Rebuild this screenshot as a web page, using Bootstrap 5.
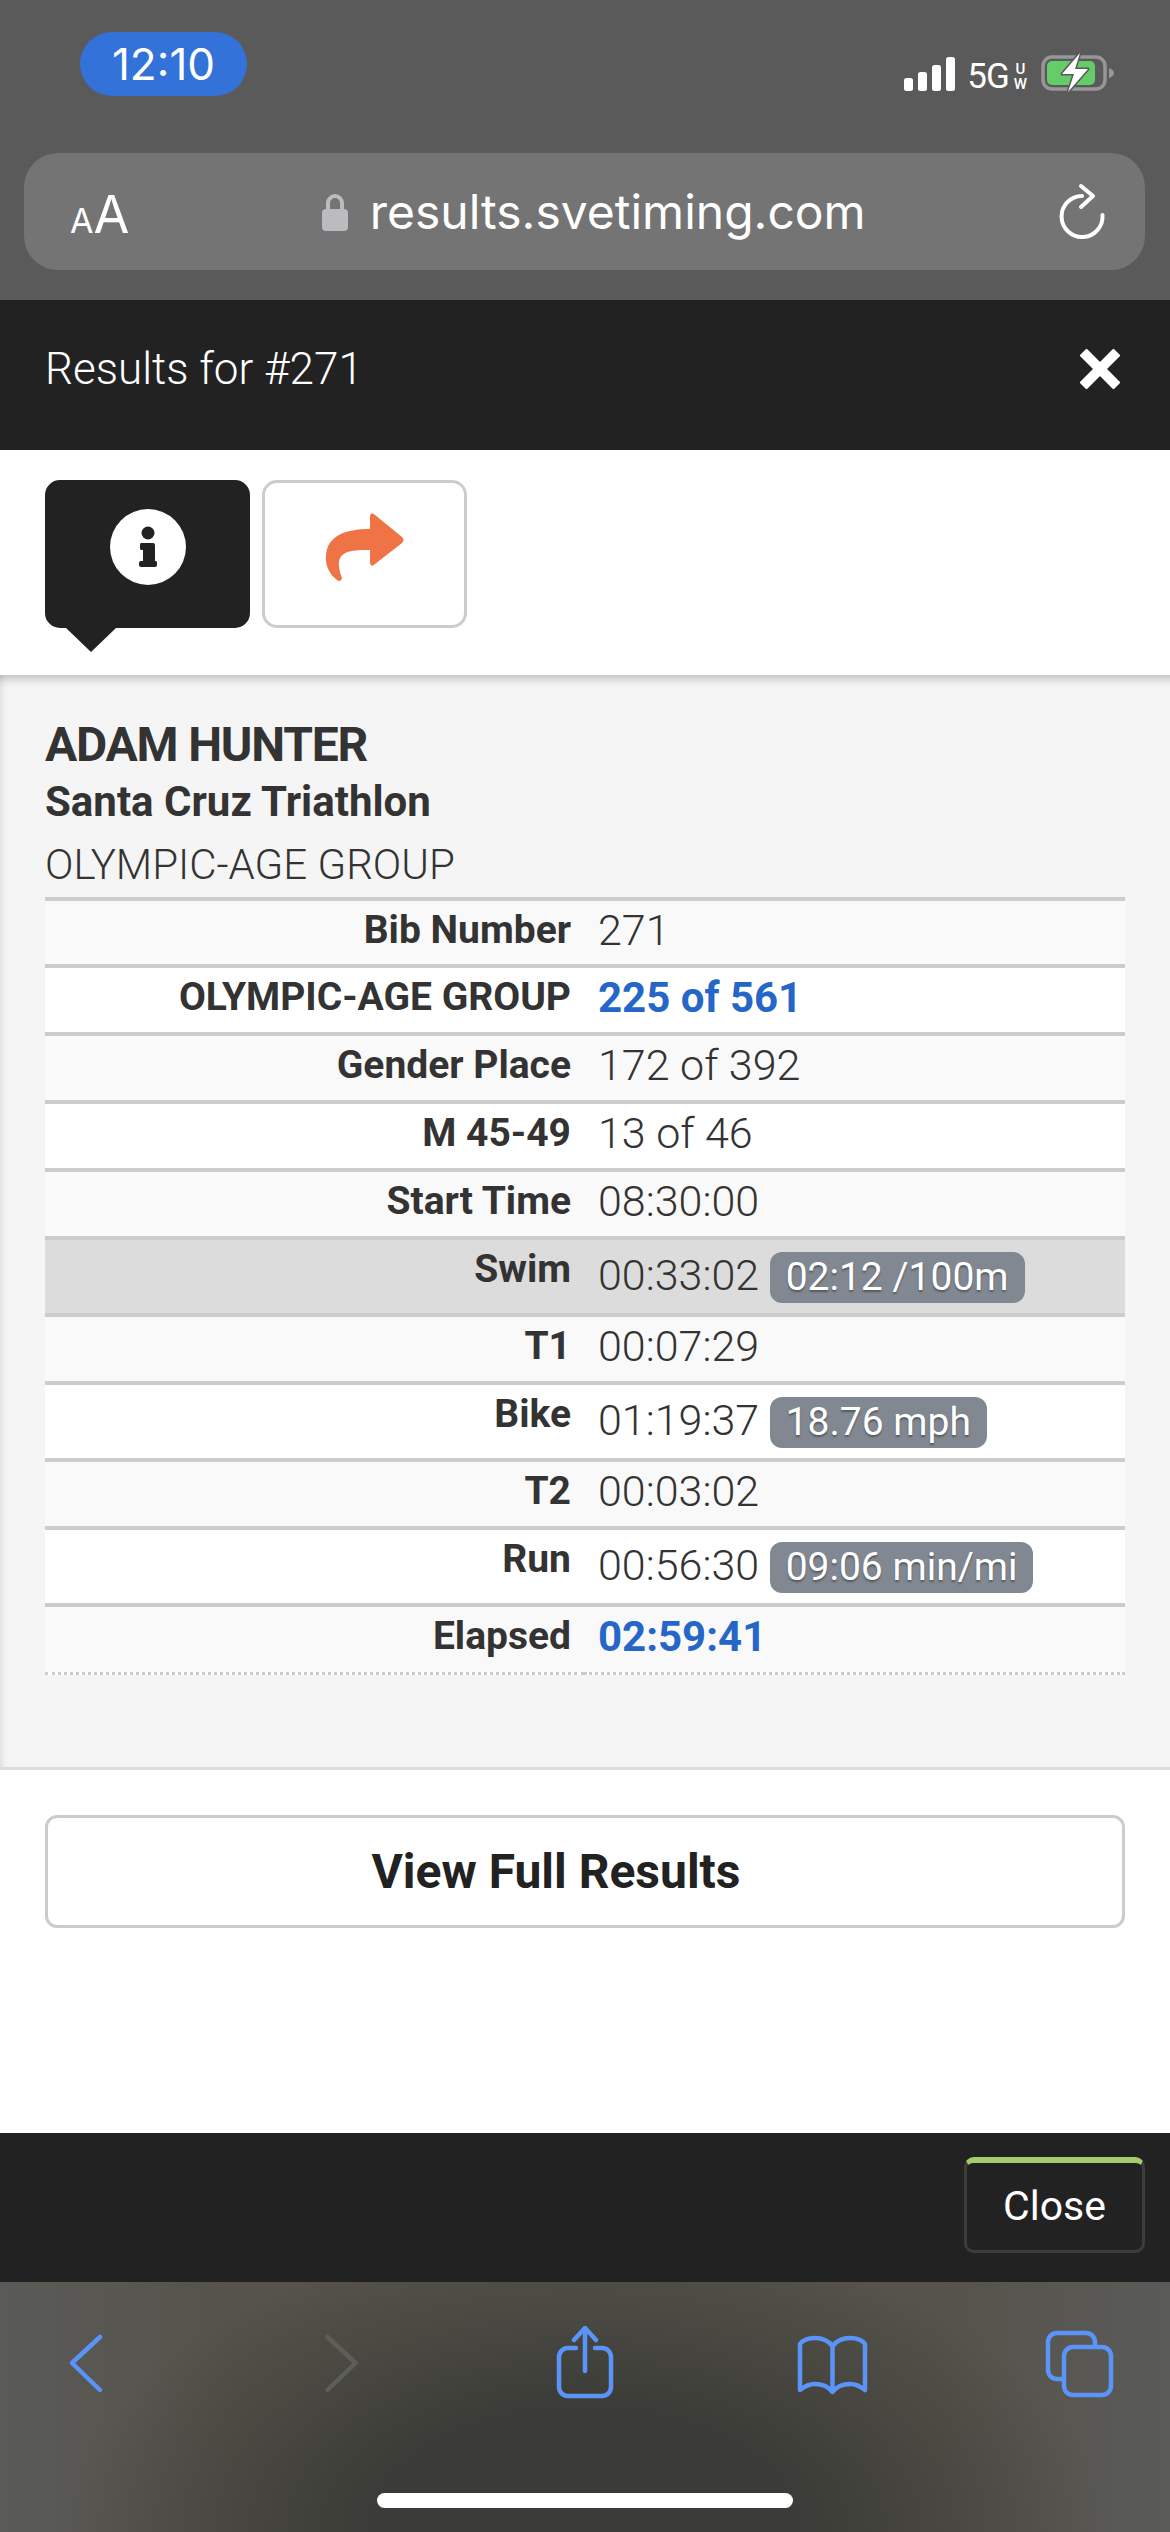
<!DOCTYPE html>
<html lang="en">
<head>
  <meta charset="UTF-8" />
  <meta name="viewport" content="width=device-width, initial-scale=1.0" />
  <title>Results for #271</title>
  <link href="https://cdn.jsdelivr.net/npm/bootstrap@5.3.0/dist/css/bootstrap.min.css" rel="stylesheet">
  <style>
    body { font-family: Roboto, "Liberation Sans", sans-serif; font-weight: 300; color: #333; background: #fff; }
    .res-screen { width: 1170px; height: 2532px; overflow: hidden; }

    /* safari chrome, top */
    .safari-top { height: 300px; background: #5a5a5a; color: #fff; font-family: Inter, "Liberation Sans", sans-serif; font-weight: 400; }
    .status-row { padding: 32px 54px 0 80px; height: 96px; }
    .clock-pill { width: 167px; height: 64px; line-height: 64px; border-radius: 32px; background: #3272d9; text-align: center; font-size: 44px; }
    .status-icons { margin-top: 18px; font-family: Roboto, "Liberation Sans", sans-serif; }
    .net-5g { font-size: 35px; line-height: 35px; margin: 9px 0 0 12px; letter-spacing: -1px; }
    .net-uw { font-size: 15px; line-height: 15px; font-weight: 500; margin: 12px 14px 0 5px; text-align: center; }
    .url-bar { height: 117px; margin: 57px 25px 0 24px; padding: 0 39px 0 46px; background: #747474; border-radius: 34px; }
    .url-aa { line-height: 1; white-space: nowrap; padding-top: 6px; }
    .url-aa .aa-s { font-size: 34px; }
    .url-aa .aa-l { font-size: 52px; }
    .url-lock { gap: 22px; }
    .url-text { font-size: 48px; line-height: 60px; }

    /* modal header */
    .res-head { height: 150px; padding: 0 50px 12px 45px; background: #222; color: #fff; font-size: 44px; }

    /* icon tabs */
    .tab-strip { height: 225px; padding: 30px 0 0 45px; gap: 12px; background: #fff; }
    .tab-btn { width: 205px; height: 148px; padding: 0 0 14px; border-radius: 15px; border: 3px solid #ccc; background: #fff; }
    .tab-btn.is-on { position: relative; background: #222; border-color: #222; }
    .tab-btn.is-on::after { content: ""; position: absolute; left: 18px; top: 145px; border-style: solid; border-width: 24px 25px 0; border-color: #222 transparent transparent; }

    /* result panel */
    .res-panel { padding: 40px 45px 92px; background: #f5f5f5; border-bottom: 3px solid #ddd; box-shadow: inset 0 14px 10px -10px rgba(0,0,0,.22), inset 8px 0 6px -6px rgba(0,0,0,.1); }
    .res-name { font-size: 48px; line-height: 60px; font-weight: 700; letter-spacing: -1.2px; }
    .res-event { font-size: 42px; line-height: 54px; font-weight: 700; }
    .res-group { font-size: 42px; line-height: 60px; margin: 6px 0 2px; }

    .res-table { --bs-table-bg: #fff; --bs-table-striped-bg: #f9f9f9; --bs-table-color: #333; --bs-table-striped-color: #333; table-layout: fixed; width: 1080px; margin: 0; border-collapse: separate; border-spacing: 0; border-top: 4px solid #ccc; }
    .res-table > tbody > tr > * { height: 68px; padding: 5px 0 0; border-bottom: 4px solid #ccc; vertical-align: top; }
    .res-table > tbody > tr:first-child > * { height: 67px; }
    .res-table th { width: 539px; padding-right: 13px !important; text-align: right; font-size: 39px; line-height: 48px; font-weight: 700; }
    .res-table td { padding-left: 14px !important; font-size: 43px; line-height: 48px; font-weight: 300; white-space: nowrap; }
    .res-table tr.has-pace > * { height: 77px; }
    .res-table tr.has-pace > td { padding-top: 11px; }
    .res-table tr.is-swim > * { --bs-table-accent-bg: #dcdcdc; }
    .res-table tr.is-last > * { height: 68px; border-bottom: 3px dotted #ccc; }
    .res-blue { color: #2566c8; font-size: 42px; font-weight: 700; }
    .pace-pill { height: 51px; padding: 0 16px; font-size: 39px; line-height: 51px; font-weight: 400; border-radius: 12px; background: #828891; color: #fff; text-shadow: 0 2px 2px rgba(0,0,0,.35); vertical-align: baseline; }

    .res-full { padding: 45px 45px 0; }
    .res-full .btn { height: 113px; padding: 0 58px 0 0; border: 3px solid #ccc; border-radius: 12px; background: #fff; color: #222; font-size: 48px; font-weight: 700; }

    /* modal footer */
    .res-foot { height: 149px; padding: 24px 25px 0 0; background: #222; }
    .close-btn { width: 181px; height: 96px; padding: 0; border: 3px solid #3c3c3c; border-top: 6px solid #a3cc6b; border-radius: 10px; background: #222; color: #fff; font-size: 41px; font-weight: 400; }

    /* safari chrome, bottom */
    .safari-bottom { height: 250px; padding: 44px 45px 0 41px; background:
      radial-gradient(ellipse 520px 300px at 50% 100%, #3b3b37 40%, rgba(59,59,55,0) 100%),
      linear-gradient(90deg, #5a5a58 0, #55534a 20%, #55534a 80%, #5a5a58 100%); }
    .safari-bottom svg { width: 90px; height: 80px; fill: none; stroke: #5b94f8; stroke-width: 4.5; stroke-linecap: round; stroke-linejoin: round; }
    .home-bar { width: 416px; height: 15px; margin: 87px auto 0; border-radius: 8px; background: #fff; position: relative; left: 2px; }
  </style>
</head>
<body>
  <div class="res-screen d-flex flex-column">

    <div class="safari-top">
      <div class="status-row d-flex justify-content-between align-items-start">
        <div class="clock-pill">12:10</div>
        <div class="status-icons d-flex align-items-start">
          <svg width="51" height="42" viewBox="0 0 51 42" fill="#fff">
            <rect x="0" y="28" width="9" height="13" rx="2.5"/>
            <rect x="14" y="22" width="9" height="19" rx="2.5"/>
            <rect x="28" y="15" width="9" height="26" rx="2.5"/>
            <rect x="42" y="7" width="9" height="34" rx="2.5"/>
          </svg>
          <span class="net-5g">5G</span>
          <span class="net-uw">U<br>W</span>
          <svg width="75" height="44" viewBox="0 0 75 44">
            <rect x="2" y="7" width="62" height="32" rx="9" fill="none" stroke="#979797" stroke-width="3.5"/>
            <rect x="6" y="11" width="48" height="24" rx="5" fill="#64cc68"/>
            <path d="M68 18 Q73 20 73 23 Q73 26 68 28 Z" fill="#979797"/>
            <path d="M39 3 L21 24 H33 L27 42 L47 19 H34 Z" fill="#fff" stroke="#5a5a5a" stroke-width="3" stroke-linejoin="round" paint-order="stroke"/>
          </svg>
        </div>
      </div>
      <div class="url-bar d-flex justify-content-between align-items-center">
        <div class="url-aa"><span class="aa-s">A</span><span class="aa-l">A</span></div>
        <div class="url-lock d-flex align-items-center">
          <svg width="26" height="38" viewBox="0 0 26 38">
            <path d="M6 18 V10 a7 7 0 0 1 14 0 V18" fill="none" stroke="#bbbbc0" stroke-width="4"/>
            <rect x="0" y="16" width="26" height="22" rx="4" fill="#bbbbc0"/>
          </svg>
          <span class="url-text">results.svetiming.com</span>
        </div>
        <svg width="48" height="60" viewBox="0 0 48 60" fill="none" stroke="#fff" stroke-width="4" stroke-linecap="round" stroke-linejoin="round">
          <path d="M44.5 33 A20.5 20.5 0 1 1 24 14"/>
          <path d="M23 4 L35 14 L23 25"/>
        </svg>
      </div>
    </div>

    <div class="res-head d-flex justify-content-between align-items-center">
      <span>Results for #271</span>
      <svg width="40" height="40" viewBox="0 0 40 40" stroke="#fff" stroke-width="10">
        <path d="M3 3 L37 37 M37 3 L3 37"/>
      </svg>
    </div>

    <div class="tab-strip d-flex align-items-start">
      <button type="button" class="btn tab-btn is-on">
        <svg width="76" height="76" viewBox="0 0 76 76">
          <circle cx="38" cy="38" r="38" fill="#fff"/>
          <circle cx="38" cy="24" r="6.5" fill="#222"/>
          <path d="M31 34 H43 Q45 34 45 36 V52 H46 Q47 52 47 54 V56 Q47 58 45 58 H31 Q29 58 29 56 V54 Q29 52 31 52 H33 V41 H31 Q30 41 30 39 V36 Q30 34 31 34 Z" fill="#222"/>
        </svg>
      </button>
      <button type="button" class="btn tab-btn">
        <svg width="80" height="70" viewBox="0 0 80 70" fill="#ef7344">
          <path d="M45 4 Q46 -1 50 3 L77 25 Q80 28 77 31 L50 52 Q46 56 45 51 L45 38 C28 38 12 38 14 55 Q15 62 17 66 Q16 71 12 68 C4 62 0 52 1 44 C2 24 20 17 45 17 Z"/>
        </svg>
      </button>
    </div>

    <div class="res-panel">
      <div class="res-name">ADAM HUNTER</div>
      <div class="res-event">Santa Cruz Triathlon</div>
      <div class="res-group">OLYMPIC-AGE GROUP</div>
      <table class="table table-striped res-table">
        <tbody>
          <tr><th>Bib Number</th><td>271</td></tr>
          <tr><th>OLYMPIC-AGE GROUP</th><td><span class="res-blue">225 of 561</span></td></tr>
          <tr><th>Gender Place</th><td>172 of 392</td></tr>
          <tr><th>M 45-49</th><td>13 of 46</td></tr>
          <tr><th>Start Time</th><td>08:30:00</td></tr>
          <tr class="has-pace is-swim"><th>Swim</th><td>00:33:02 <span class="badge pace-pill">02:12 /100m</span></td></tr>
          <tr><th>T1</th><td>00:07:29</td></tr>
          <tr class="has-pace"><th>Bike</th><td>01:19:37 <span class="badge pace-pill">18.76 mph</span></td></tr>
          <tr><th>T2</th><td>00:03:02</td></tr>
          <tr class="has-pace"><th>Run</th><td>00:56:30 <span class="badge pace-pill">09:06 min/mi</span></td></tr>
          <tr class="is-last"><th>Elapsed</th><td><span class="res-blue">02:59:41</span></td></tr>
        </tbody>
      </table>
    </div>

    <div class="res-full flex-grow-1">
      <button type="button" class="btn w-100">View Full Results</button>
    </div>

    <div class="res-foot d-flex justify-content-end align-items-start">
      <button type="button" class="btn close-btn">Close</button>
    </div>

    <div class="safari-bottom">
      <div class="d-flex justify-content-between">
        <svg viewBox="0 0 90 80"><path d="M59 11 L31 37 L59 64" /></svg>
        <svg viewBox="0 0 90 80" style="stroke:#5e5e59"><path d="M37.5 11 L65.5 37 L37.5 64" /></svg>
        <svg viewBox="0 0 90 80">
          <path d="M38 22 H30 a9 9 0 0 0 -9 9 V61 a9 9 0 0 0 9 9 H64 a9 9 0 0 0 9 -9 V31 a9 9 0 0 0 -9 -9 H57"/>
          <path d="M47 45 V2 M36 14 L47 2 L58 14"/>
        </svg>
        <svg viewBox="0 0 90 80">
          <path d="M45.5 20 C40 13 32 12 28 12 C22 12 16 14 13 18 V64 C18 60 24 58 28 58 C34 58 41 60 45.5 66 C50 60 57 58 63 58 C67 58 73 60 78 64 V18 C75 14 69 12 63 12 C59 12 51 13 45.5 20 V66"/>
        </svg>
        <svg viewBox="0 0 90 80">
          <rect x="29" y="21" width="47" height="48" rx="9"/>
          <path d="M60 19 V16 a9 9 0 0 0 -9 -9 H22 a9 9 0 0 0 -9 9 V44 a9 9 0 0 0 9 9 H27"/>
        </svg>
      </div>
      <div class="home-bar"></div>
    </div>

  </div>
  <script src="https://cdn.jsdelivr.net/npm/bootstrap@5.3.0/dist/js/bootstrap.bundle.min.js"></script>
</body>
</html>
